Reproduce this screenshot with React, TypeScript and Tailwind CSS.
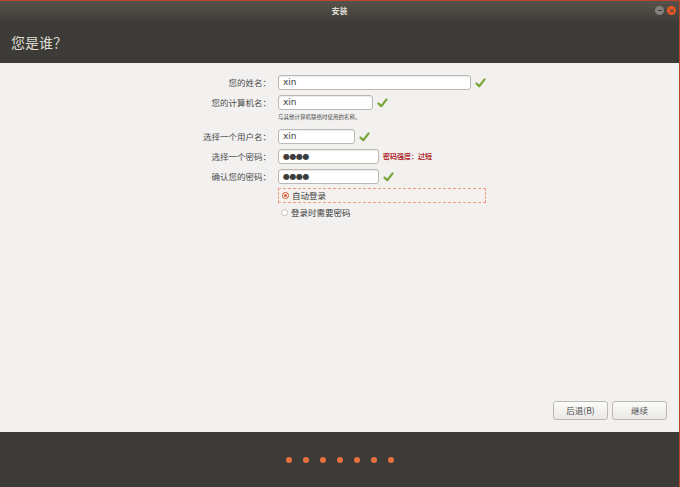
import React from 'react';

const cjk = "font-['Noto_Sans_CJK_SC','Noto_Sans',sans-serif]";

function Check() {
  return (
    <svg width="11" height="10" viewBox="0 0 11 10" className="shrink-0">
      <path d="M1.5 5.5 L4.2 8.3 L9.6 1.4" fill="none" stroke="#7aa63a" strokeWidth="2.2" strokeLinecap="round" strokeLinejoin="round" />
    </svg>
  );
}

function Field({ width, value, password }: { width: number; value: string; password?: boolean }) {
  return (
    <div
      className="h-[15px] rounded-[3px] border border-[#bcb8b2] bg-white shadow-[inset_0_1px_1px_rgba(0,0,0,0.08)] flex items-center pl-[4px]"
      style={{ width }}
    >
      {password ? (
        <span className="font-['DejaVu_Sans',sans-serif] text-[8px] leading-none tracking-[-0.5px] text-[#3c3c3c]">{value}</span>
      ) : (
        <span className="font-['DejaVu_Sans',sans-serif] text-[9px] leading-none text-[#3c3c3c]">{value}</span>
      )}
    </div>
  );
}

function Label({ children }: { children: React.ReactNode }) {
  return <div className="text-right text-[8.5px] leading-[15px] text-[#4d4d4d] pr-[1px]">{children}</div>;
}

export default function App() {
  return (
    <div className={`w-[680px] h-[487px] flex flex-col bg-[#3c3b37] border-t border-r border-[#b8432b] ${cjk}`}>
      {/* title bar */}
      <div className="h-[20px] shrink-0 flex items-center bg-gradient-to-b from-[#56524c] to-[#423f3a] relative">
        <div className="flex-1 text-center text-[8px] font-bold text-[#dfdbd2]">安装</div>
        <div className="absolute right-[3px] top-[5px] flex gap-[3px]">
          <div className="w-[9px] h-[9px] rounded-full bg-[#86837e] flex items-center justify-center">
            <div className="w-[4px] h-[1px] bg-[#3c3b37]" />
          </div>
          <div className="w-[9px] h-[9px] rounded-full bg-[#ef5a25] flex items-center justify-center text-[7px] leading-none text-[#3c3b37] font-bold">×</div>
        </div>
      </div>

      {/* header */}
      <div className="h-[42px] shrink-0 flex items-center pl-[11px]">
        <div className="text-[14px] text-[#dfdbd2]">您是谁？</div>
      </div>

      {/* content */}
      <div className="flex-1 bg-[#f2f1f0] flex flex-col">
        <div className="pt-[12px] grid grid-cols-[272px_1fr] gap-x-[6px]">
          <Label>您的姓名：</Label>
          <div className="flex items-center gap-[4px]">
            <Field width={193} value="xin" />
            <Check />
          </div>

          <div className="col-span-2 h-[5px]" />
          <Label>您的计算机名：</Label>
          <div className="flex items-center gap-[4px]">
            <Field width={95} value="xin" />
            <Check />
          </div>

          <div />
          <div className="h-[19px] pt-[3px] text-[5.5px] leading-[9px] text-[#4d4d4d]">与其他计算机联络时使用的名称。</div>

          <Label>选择一个用户名：</Label>
          <div className="flex items-center gap-[4px]">
            <Field width={77} value="xin" />
            <Check />
          </div>

          <div className="col-span-2 h-[5px]" />
          <Label>选择一个密码：</Label>
          <div className="flex items-center gap-[4px]">
            <Field width={101} value="●●●●" password />
            <span className="text-[7px] font-bold text-[#b0282d]">密码强度：过短</span>
          </div>

          <div className="col-span-2 h-[5px]" />
          <Label>确认您的密码：</Label>
          <div className="flex items-center gap-[4px]">
            <Field width={101} value="●●●●" password />
            <Check />
          </div>

          <div className="col-span-2 h-[4px]" />
          <div />
          <div className="w-[208px] h-[15px] border border-dashed border-[#ee9f7f] bg-[#f5f1ee] flex items-center pl-[3px] gap-[3px]">
            <div className="w-[7px] h-[7px] rounded-full bg-white border border-[#c9502a] flex items-center justify-center">
              <div className="w-[3px] h-[3px] rounded-full bg-[#e2572b]" />
            </div>
            <span className="text-[8.5px] text-[#3c3c3c]">自动登录</span>
          </div>

          <div className="col-span-2 h-[2px]" />
          <div />
          <div className="h-[15px] flex items-center pl-[3px] gap-[3px]">
            <div className="w-[7px] h-[7px] rounded-full bg-white border border-[#c4c0ba]" />
            <span className="text-[8.5px] text-[#3c3c3c]">登录时需要密码</span>
          </div>
        </div>

        <div className="flex-1" />
        <div className="flex justify-end gap-[4px] pr-[12px] pb-[12px]">
          <button className="w-[55px] h-[19px] rounded-[3px] border border-[#bbb7b1] bg-gradient-to-b from-[#fbfbfa] to-[#ebe9e6] text-[8.5px] text-[#4c4c4c]">后退(B)</button>
          <button className="w-[55px] h-[19px] rounded-[3px] border border-[#bbb7b1] bg-gradient-to-b from-[#fbfbfa] to-[#ebe9e6] text-[8.5px] text-[#4c4c4c]">继续</button>
        </div>
      </div>

      {/* progress dots */}
      <div className="h-[55px] shrink-0 flex items-center justify-center gap-[11px]">
        {[0, 1, 2, 3, 4, 5, 6].map((i) => (
          <div key={i} className="w-[6px] h-[6px] rounded-full bg-[#ea7040]" />
        ))}
      </div>
    </div>
  );
}
